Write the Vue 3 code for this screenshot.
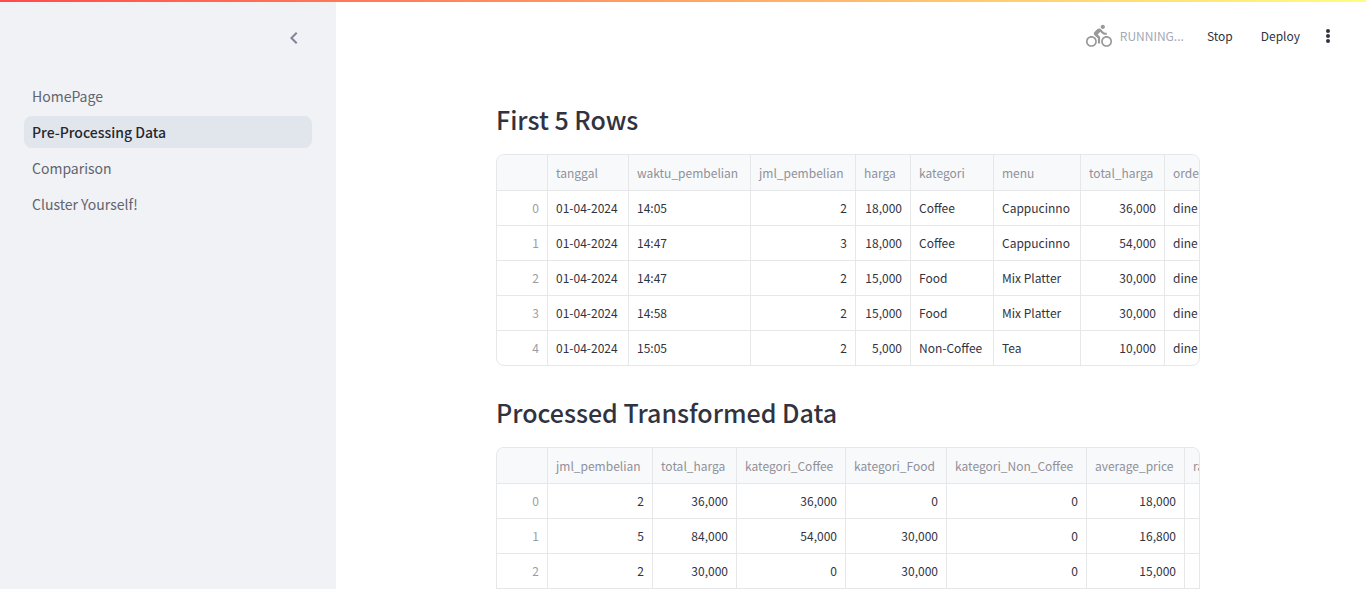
<script setup>
const pages = ['HomePage', 'Pre-Processing Data', 'Comparison', 'Cluster Yourself!']
const activePage = 'Pre-Processing Data'

const grids = [
  {
    title: 'First 5 Rows',
    partial: false,
    columns: [
      { name: 'tanggal', width: 81 },
      { name: 'waktu_pembelian', width: 122 },
      { name: 'jml_pembelian', width: 105, numeric: true },
      { name: 'harga', width: 55, numeric: true },
      { name: 'kategori', width: 83 },
      { name: 'menu', width: 87 },
      { name: 'total_harga', width: 84, numeric: true },
      { name: 'order_type', width: 90 }
    ],
    rows: [
      ['01-04-2024', '14:05', '2', '18,000', 'Coffee', 'Cappucinno', '36,000', 'dine in'],
      ['01-04-2024', '14:47', '3', '18,000', 'Coffee', 'Cappucinno', '54,000', 'dine in'],
      ['01-04-2024', '14:47', '2', '15,000', 'Food', 'Mix Platter', '30,000', 'dine in'],
      ['01-04-2024', '14:58', '2', '15,000', 'Food', 'Mix Platter', '30,000', 'dine in'],
      ['01-04-2024', '15:05', '2', '5,000', 'Non-Coffee', 'Tea', '10,000', 'dine in']
    ]
  },
  {
    title: 'Processed Transformed Data',
    partial: true,
    columns: [
      { name: 'jml_pembelian', width: 105, numeric: true },
      { name: 'total_harga', width: 84, numeric: true },
      { name: 'kategori_Coffee', width: 109, numeric: true },
      { name: 'kategori_Food', width: 101, numeric: true },
      { name: 'kategori_Non_Coffee', width: 140, numeric: true },
      { name: 'average_price', width: 98, numeric: true },
      { name: 'ratio', width: 90, numeric: true }
    ],
    rows: [
      ['2', '36,000', '36,000', '0', '0', '18,000', ''],
      ['5', '84,000', '54,000', '30,000', '0', '16,800', ''],
      ['2', '30,000', '0', '30,000', '0', '15,000', '']
    ]
  }
]
</script>

<template>
  <div class="app">
    <div class="decoration"></div>
    <aside class="sidebar">
      <div class="sidebar-top">
        <button class="collapse" type="button" aria-label="Collapse sidebar">
          <svg viewBox="0 0 24 24" width="24" height="24" fill="currentColor">
            <path d="M15.41 7.41 14 6l-6 6 6 6 1.41-1.41L10.83 12z" />
          </svg>
        </button>
      </div>
      <nav class="nav">
        <a
          v-for="page in pages"
          :key="page"
          href="#"
          class="nav-link"
          :class="{ active: page === activePage }"
        >{{ page }}</a>
      </nav>
    </aside>

    <div class="main">
      <header class="toolbar">
        <div class="status">
          <svg class="cyclist" viewBox="0 0 24 24" width="26" height="26" fill="#999" aria-hidden="true">
            <path d="M15.5 5.5c1.1 0 2-.9 2-2s-.9-2-2-2-2 .9-2 2 .9 2 2 2zM5 12c-2.8 0-5 2.2-5 5s2.2 5 5 5 5-2.2 5-5-2.2-5-5-5zm0 8.5c-1.9 0-3.5-1.6-3.5-3.5s1.6-3.5 3.5-3.5 3.5 1.6 3.5 3.5-1.6 3.5-3.5 3.5zm5.8-10 2.4-2.4.8.8c1.3 1.3 3 2.1 5.1 2.1V9c-1.5 0-2.7-.6-3.6-1.5l-1.9-1.9c-.5-.4-1-.6-1.6-.6s-1.1.2-1.4.6L7.8 8.4c-.4.4-.6.9-.6 1.4 0 .6.2 1.1.6 1.4L11 14v5h2v-6.2l-2.2-2.3zM19 12c-2.8 0-5 2.2-5 5s2.2 5 5 5 5-2.2 5-5-2.2-5-5-5zm0 8.5c-1.9 0-3.5-1.6-3.5-3.5s1.6-3.5 3.5-3.5 3.5 1.6 3.5 3.5-1.6 3.5-3.5 3.5z" />
          </svg>
          <span class="status-text">RUNNING...</span>
        </div>
        <button class="tool stop" type="button">Stop</button>
        <button class="tool deploy" type="button">Deploy</button>
        <button class="more" type="button" aria-label="Main menu">
          <svg viewBox="0 0 4 14" width="4" height="14" fill="currentColor">
            <circle cx="2" cy="2" r="2" />
            <circle cx="2" cy="7" r="2" />
            <circle cx="2" cy="12" r="2" />
          </svg>
        </button>
      </header>

      <main class="content">
        <section v-for="grid in grids" :key="grid.title" class="block">
          <h3 class="title">{{ grid.title }}</h3>
          <div class="frame" :class="{ partial: grid.partial }">
            <table class="grid" :aria-label="grid.title">
              <colgroup>
                <col class="index-col" />
                <col v-for="col in grid.columns" :key="col.name" :style="{ width: col.width + 'px' }" />
              </colgroup>
              <thead>
                <tr>
                  <th></th>
                  <th v-for="col in grid.columns" :key="col.name" scope="col">{{ col.name }}</th>
                </tr>
              </thead>
              <tbody>
                <tr v-for="(row, r) in grid.rows" :key="r">
                  <td class="numeric index">{{ r }}</td>
                  <td
                    v-for="(cell, c) in row"
                    :key="c"
                    :class="{ numeric: grid.columns[c].numeric }"
                  >{{ cell }}</td>
                </tr>
              </tbody>
            </table>
          </div>
        </section>
      </main>
    </div>
  </div>
</template>

<style>
body {
  margin: 0;
  overflow: hidden;
}
</style>

<style scoped>
.app {
  display: flex;
  position: relative;
  height: 100vh;
  overflow: hidden;
  background: #fff;
  color: #31333f;
  font-family: "Noto Sans CJK SC", "Noto Sans", sans-serif;
  font-size: 14px;
}

.decoration {
  position: absolute;
  top: 0;
  left: 0;
  right: 0;
  height: 2px;
  background: linear-gradient(90deg, #ff4b4b, #fffd80);
}

.sidebar {
  box-sizing: border-box;
  flex: none;
  width: 336px;
  padding: 24px;
  background: #f0f2f6;
}

.sidebar-top {
  display: flex;
  justify-content: flex-end;
  height: 56px;
}

.collapse {
  display: flex;
  align-items: center;
  justify-content: center;
  width: 36px;
  height: 28px;
  padding: 0;
  border: 0;
  background: none;
  color: #808495;
}

.nav {
  display: flex;
  flex-direction: column;
  gap: 4px;
}

.nav-link {
  padding: 0 8px;
  border-radius: 8px;
  color: #62646e;
  line-height: 32px;
  text-decoration: none;
}

.nav-link.active {
  background: #e1e6ed;
  color: #262730;
  font-weight: 500;
}

.main {
  display: flex;
  flex: 1;
  flex-direction: column;
  min-width: 0;
}

.toolbar {
  display: flex;
  align-items: center;
  justify-content: flex-end;
  height: 72px;
  flex: none;
  padding-right: 36px;
}

.status {
  display: flex;
  align-items: center;
  gap: 8px;
  margin-right: 23px;
}

.status-text,
.tool {
  padding: 0;
  font-size: 12px;
  line-height: 18px;
}

.status-text {
  color: #a3a8b8;
}

.tool,
.more {
  display: flex;
  align-items: center;
  border: 0;
  background: none;
  color: #31333f;
  font-family: inherit;
}

.deploy {
  margin-left: 28px;
}

.more {
  margin-left: 26px;
  padding: 0;
}

.content {
  box-sizing: border-box;
  width: 100%;
  max-width: 710px;
  margin: 0 auto;
  padding: 25px 6px 0 0;
}

.block {
  margin-bottom: 24px;
}

.title {
  margin: 0;
  padding: 6px 0 18px;
  font-size: 25px;
  font-weight: 500;
  line-height: 33px;
}

.frame {
  overflow: hidden;
  border: 1px solid #e6e7e9;
  border-radius: 8px;
}

.frame.partial {
  border-bottom: 0;
  border-radius: 8px 8px 0 0;
}

.grid {
  width: 100%;
  table-layout: fixed;
  border-collapse: separate;
  border-spacing: 0;
  font-size: 12px;
}

.index-col {
  width: 51px;
}

.grid th,
.grid td {
  box-sizing: border-box;
  height: 35px;
  padding: 0 8px;
  border-right: 1px solid #e6e7e9;
  border-bottom: 1px solid #e6e7e9;
  font-weight: 400;
  line-height: 20px;
  text-align: left;
  white-space: nowrap;
}

.grid th {
  height: 36px;
  background: #f8f9fb;
  color: #8f919a;
}

.grid .numeric {
  text-align: right;
}

.grid .index {
  color: #9c9da4;
}

.frame:not(.partial) tbody tr:last-child td {
  height: 34px;
  border-bottom: 0;
}
</style>
